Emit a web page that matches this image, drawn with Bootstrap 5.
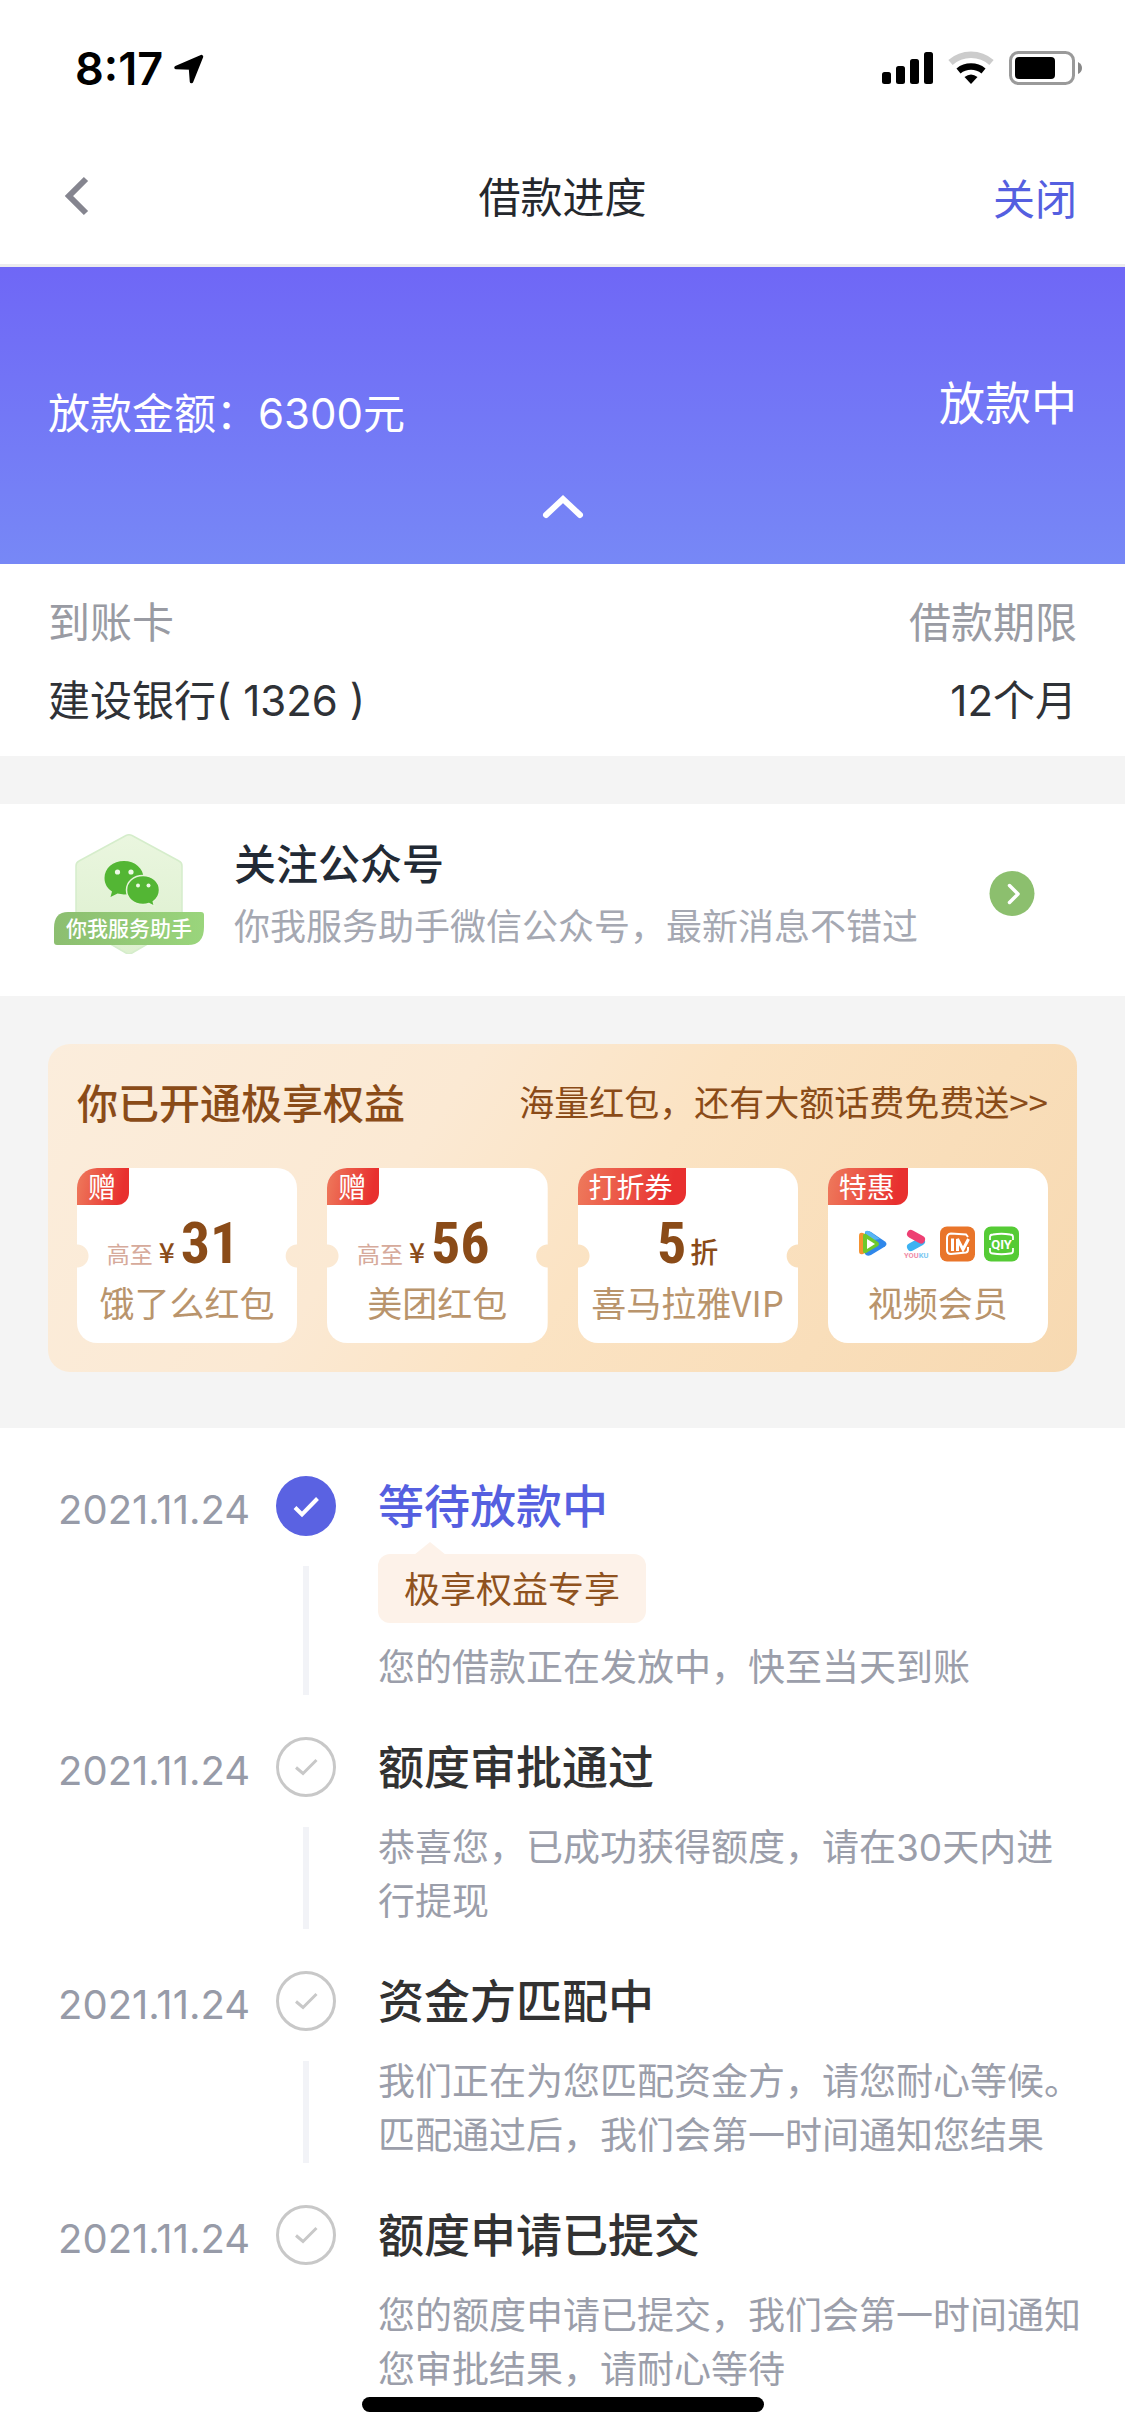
<!DOCTYPE html>
<html lang="zh-CN">
<head>
<meta charset="utf-8">
<meta name="viewport" content="width=device-width, initial-scale=1">
<title>借款进度</title>
<link rel="stylesheet" href="https://cdn.jsdelivr.net/npm/bootstrap@5.3.0/dist/css/bootstrap.min.css">
<style>
  body { font-family: Inter, "Noto Sans CJK SC", sans-serif; font-size: 42px; line-height: 60px; color: #2f3237; background: #fff; }
  svg { display: block; flex: none; }
  a { text-decoration: none; color: inherit; }
  .side-pad { padding-left: 48px; padding-right: 48px; }

  .status-bar { height: 132px; padding: 6px 43px 0 75px; }
  .status-time { font-size: 45px; font-weight: 600; color: #000; }
  .title-bar { height: 135px; border-bottom: 3px solid #ececee; }
  .title-bar h1 { font-size: 42px; line-height: 60px; font-weight: 400; color: #25282d; }
  .bar-btn { border: 0; background: none; padding: 0; line-height: 60px; color: #555fe0; }
  .bar-close { padding-top: 4px; }

  .loan-hero { height: 297px; padding-top: 117px; background: linear-gradient(#6f67f6, #7788f6); color: #fff; }
  .loan-hero .state { font-size: 46px; line-height: 38px; }
  .loan-hero .toggle { border: 0; background: none; padding: 0; margin-top: 49px; }
  .loan-info { padding-top: 20px; padding-bottom: 16px; line-height: 78px; }
  .muted { color: #999ba3; }
  .gap-band { background: #f4f4f4; }

  .follow { padding-top: 26px; padding-bottom: 38px; line-height: 62px; }
  .follow-text { margin-left: 30px; padding-top: 4px; }
  .follow-title { font-weight: 500; color: #222a35; }
  .follow-sub { font-size: 36px; color: #a5a8b2; }
  .follow-badge { margin-left: 6px; }
  .follow-badge text { font-family: "Noto Sans CJK SC", sans-serif; font-size: 21px; font-weight: 500; fill: #fff; }
  .follow-arrow { margin-right: 42px; }

  .perks-wrap { padding: 48px 48px 56px; }
  .perks { border-radius: 22px; padding: 27px 29px 29px; color: #8a4b18; background: linear-gradient(125deg, #fbeddc 0%, #fbe9d3 35%, #fbe3c3 55%, #f7d9b1 100%); font-family: "Noto Sans CJK SC", sans-serif; }
  .perks h2 { font-size: 41px; line-height: 60px; font-weight: 500; }
  .perks-more { font-size: 35px; }
  .coupons { gap: 30px; margin-top: 37px; }
  .coupon { position: relative; flex: 1 1 0; height: 175px; border-radius: 20px; padding-top: 52px;
    background: radial-gradient(circle at 0 88px, transparent 11px, #fff 12px) left / 51% 100% no-repeat,
                radial-gradient(circle at 100% 88px, transparent 11px, #fff 12px) right / 51% 100% no-repeat; }
  .coupon.plain { background: #fff; }
  .coupon-tag { position: absolute; left: 0; top: 0; padding: 0 13px 0 11px; font-size: 28px; line-height: 37px; color: #fff; border-radius: 20px 0 12px 0; background: linear-gradient(100deg, #ee7a5c, #e8302f 85%); }
  .coupon-value { height: 52px; line-height: 46px; gap: 4px; }
  .coupon-value.money { padding-right: 28px; gap: 6px; }
  .coupon-num { font-family: "Roboto Condensed", Roboto, sans-serif; font-weight: 700; font-size: 58px; }
  .coupon-unit { font-size: 28px; font-weight: 500; }
  .coupon-pre { font-size: 23px; color: #d6aa9b; }
  .coupon-name { font-size: 35px; line-height: 60px; color: #b9946c; text-align: center; white-space: nowrap; }
  .coupon-apps { padding-top: 6px; gap: 9px; }
  .coupon-apps text { font-family: Roboto, sans-serif; font-weight: 700; }

  .steps { padding: 48px 42px 0 58px; }
  .step-date { flex: none; width: 218px; font-size: 40px; line-height: 68px; color: #979ba8; }
  .step-rail { flex: none; width: 60px; margin-right: 42px; }
  .step-line { width: 6px; margin: 30px 0 42px; background: #f2f3f7; }
  .step-body { min-width: 0; padding-bottom: 42px; }
  .step:last-child .step-body { padding-bottom: 39px; }
  .step-title { font-size: 46px; line-height: 60px; font-weight: 500; color: #323232; }
  .step-title.now { color: #555fe0; }
  .step-desc { font-size: 37px; line-height: 54px; color: #9b9eaa; margin-top: 24px; }
  .step-tip { position: relative; display: table; margin-top: 18px; padding: 3px 26px 0; font-size: 36px; line-height: 66px; color: #8f5220; background: #fdf2e9; border-radius: 12px; }
  .step-tip::before { content: ""; position: absolute; left: 36px; top: -12px; border: solid transparent; border-width: 0 16px 13px; border-bottom-color: #fdf2e9; }
  .step-tip + .step-desc { margin-top: 18px; }
  .home-bar { position: fixed; left: 50%; bottom: 24px; width: 402px; height: 15px; margin-left: -201px; border-radius: 8px; background: #000; }
</style>
</head>
<body>
<div class="status-bar d-flex align-items-center justify-content-between">
  <div class="d-flex align-items-center gap-2">
    <span class="status-time">8:17</span>
    <svg width="34" height="30" viewBox="-2 0 34 30"><path d="M28.500 2.500 3 13.500 17.500 14 18.500 27.500Z" fill="#000" stroke="#000" stroke-width="3.500" stroke-linejoin="round"/></svg>
  </div>
  <svg width="202" height="36" viewBox="0 0 202 36">
    <rect x="2" y="21" width="9" height="12" rx="2.500"/><rect x="16" y="15" width="9" height="18" rx="2.500"/><rect x="30" y="8" width="9" height="25" rx="2.500"/><rect x="44" y="1" width="9" height="32" rx="2.500"/>
    <path d="M70.500 11.500a31 31 0 0 1 41 0" fill="none" stroke="#ccc" stroke-width="6.500"/>
    <path d="M78.500 20a20 20 0 0 1 25 0" fill="none" stroke="#000" stroke-width="6.500"/>
    <path d="M84.500 26q6.500-5 13 0L91 33Z"/>
    <rect x="130.500" y="1.500" width="63" height="31" rx="8" fill="none" stroke="#9a9a9a" stroke-width="3"/>
    <rect x="135" y="6" width="40" height="22" rx="4"/><path d="M198 11v12q4-2 4-6t-4-6" fill="#888"/>
  </svg>
</div>

<header class="title-bar side-pad d-flex align-items-center">
  <div class="col"><button class="bar-btn d-block" type="button" aria-label="返回"><svg width="60" height="44" viewBox="0 0 60 44"><path d="M38 3 21 20 38 37" fill="none" stroke="#85858f" stroke-width="6"/></svg></button></div>
  <h1 class="m-0">借款进度</h1>
  <div class="col text-end"><button class="bar-btn bar-close" type="button">关闭</button></div>
</header>

<main>
<section class="loan-hero side-pad">
  <div class="d-flex justify-content-between">
    <div>放款金额：6300元</div>
    <div class="state">放款中</div>
  </div>
  <button class="toggle d-block mx-auto" type="button" aria-label="收起"><svg width="44" height="28" viewBox="0 0 44 28"><path d="M5 22 22 6 39 22" fill="none" stroke="#fff" stroke-width="6" stroke-linecap="round"/></svg></button>
</section>

<section class="loan-info side-pad">
  <div class="d-flex justify-content-between muted"><span>到账卡</span><span>借款期限</span></div>
  <div class="d-flex justify-content-between"><span>建设银行( 1326 )</span><span>12个月</span></div>
</section>

<div class="gap-band pt-5">
  <a href="#follow" class="follow side-pad bg-white d-flex align-items-center">
    <svg class="follow-badge" width="150" height="120" viewBox="0 0 150 120">
      <defs>
        <linearGradient id="hexFill" x1="0" y1="0" x2="0" y2="1"><stop offset="0" stop-color="#eaf6df"/><stop offset="1" stop-color="#ddf0cf"/></linearGradient>
        <linearGradient id="ribbonFill"><stop offset="0" stop-color="#8cbe70"/><stop offset="1" stop-color="#9ad57c"/></linearGradient>
      </defs>
      <path d="M72 1.500q3-1.500 6 0L125 27q3 1.500 3 5v58L78 119q-3 1.500-6 0L22 90V32q0-3.500 3-5Z" fill="url(#hexFill)" stroke="#d5edcb" stroke-width="1.500"/>
      <path d="M70 27c-11 0-19.500 7-19.500 17 0 6 3 10.500 7.500 13.500L56.500 63l7-3.500 6.500 1c11 0 19.500-7 19.500-16.500S81 27 70 27Z" fill="#53b634"/>
      <path d="M89 41.500c-9.500 0-16.500 6.500-16.500 14.500S79.500 70.500 89 70.500c2 0 4-.3 6-1l5.500 3-1.200-5c4-2.700 6.200-6.700 6.200-11.500 0-8-7-14.500-16.500-14.500Z" fill="#53b634" stroke="#e6f4da" stroke-width="1.500"/>
      <g fill="#eef9e6"><circle cx="63.500" cy="38" r="2.600"/><circle cx="77" cy="38" r="2.600"/><circle cx="84" cy="51.500" r="2"/><circle cx="94.500" cy="51.500" r="2"/></g>
      <path d="M14 78H147q3 0 3 3v12q0 18-16 18H3q-3 0-3-3V94Q0 78 14 78Z" fill="url(#ribbonFill)"/>
      <text x="75" y="102" text-anchor="middle">你我服务助手</text>
    </svg>
    <div class="follow-text flex-grow-1">
      <div class="follow-title">关注公众号</div>
      <div class="follow-sub">你我服务助手微信公众号，最新消息不错过</div>
    </div>
    <svg class="follow-arrow" width="46" height="46" viewBox="0 0 46 46"><circle cx="23" cy="22.500" r="22.500" fill="#8cbf6e"/><path d="M20.500 14.500 29 23 20.500 31.500" fill="none" stroke="#fff" stroke-width="3.500" stroke-linecap="round" stroke-linejoin="round"/></svg>
  </a>
</div>

<section class="gap-band perks-wrap">
  <div class="perks">
    <div class="d-flex justify-content-between">
      <h2 class="m-0">你已开通极享权益</h2>
      <a class="perks-more" href="#perks">海量红包，还有大额话费免费送&gt;&gt;</a>
    </div>
    <div class="coupons d-flex">
      <div class="coupon">
        <span class="coupon-tag">赠</span>
        <div class="coupon-value money d-flex justify-content-center align-items-baseline"><span class="coupon-pre">高至</span><span class="coupon-unit">¥</span><span class="coupon-num">31</span></div>
        <div class="coupon-name">饿了么红包</div>
      </div>
      <div class="coupon">
        <span class="coupon-tag">赠</span>
        <div class="coupon-value money d-flex justify-content-center align-items-baseline"><span class="coupon-pre">高至</span><span class="coupon-unit">¥</span><span class="coupon-num">56</span></div>
        <div class="coupon-name">美团红包</div>
      </div>
      <div class="coupon">
        <span class="coupon-tag">打折券</span>
        <div class="coupon-value d-flex justify-content-center align-items-baseline"><span class="coupon-num">5</span><span class="coupon-unit">折</span></div>
        <div class="coupon-name">喜马拉雅VIP</div>
      </div>
      <div class="coupon plain">
        <span class="coupon-tag">特惠</span>
        <div class="coupon-value">
          <div class="coupon-apps d-flex justify-content-center">
            <svg width="35" height="36" viewBox="2 0 35 36">
              <path d="M10 6Q12 4 16 6L30 15.500q3 2.500 0 5L16 29q-4 2-6-1Z" fill="#2f87ea"/>
              <path d="M10 6Q12 3 17 7l8 6-12 2Z" fill="#58b6f4"/>
              <path d="M4 10q0-4 4-3l4 2v17l-4 2q-4 1-4-3Z" fill="#f59230"/>
              <path d="M8 10q0-3 3-2l12 8q2 2 0 4L11 27q-3 1-3-2Z" fill="#6cc92c"/>
              <path d="M12 13 20 18 12 23Z" fill="#fff"/>
            </svg>
            <svg width="30" height="36" viewBox="0 0 30 36">
              <path d="M10 21 20 15.500" stroke="#3db2f2" stroke-width="8" stroke-linecap="round"/>
              <path d="M10 8 20 13.500" stroke="#ee3f73" stroke-width="8" stroke-linecap="round"/>
              <text x="3" y="32" font-size="7.500" fill="#f08aa6">YOU<tspan fill="#7cc8f2">KU</tspan></text>
            </svg>
            <svg width="35" height="36" viewBox="0 0 35 36">
              <rect y="0.500" width="35" height="35" rx="7" fill="#e9752a"/>
              <path d="M28 11 26 8.500 11 7.500Q7 8 7 12v12q0 4 4 4l15-1.500q2-.5 2-3V21" fill="none" stroke="#fff" stroke-width="2"/>
              <path d="M12.500 25V12.500M17.500 25V13L23 23.500 28.500 13" fill="none" stroke="#fff" stroke-width="3"/>
            </svg>
            <svg width="35" height="36" viewBox="0 0 35 36">
              <rect y="0.500" width="35" height="35" rx="7" fill="#55cb35"/>
              <path d="M6 14V11q0-2.500 3-2.500 8.500-1.500 17 0 3 0 3 2.500v3M6 22v3q0 2.500 3 2.500 8.500 1.500 17 0 3 0 3-2.500v-3" fill="none" stroke="#fff" stroke-width="1.800"/>
              <text x="17.500" y="23" font-size="13" text-anchor="middle" fill="#fff">QIY</text>
            </svg>
          </div>
        </div>
        <div class="coupon-name">视频会员</div>
      </div>
    </div>
  </div>
</section>

<section class="steps">
  <div class="step d-flex">
    <div class="step-date">2021.11.24</div>
    <div class="step-rail d-flex flex-column align-items-center">
      <svg width="60" height="60" viewBox="0 0 60 60"><circle cx="30" cy="30" r="30" fill="#5a62e2"/><path d="M19 31.500 26 38.500 41.500 22.500" fill="none" stroke="#fff" stroke-width="4"/></svg>
      <div class="step-line flex-grow-1"></div>
    </div>
    <div class="step-body flex-grow-1">
      <h2 class="step-title now m-0">等待放款中</h2>
      <div class="step-tip">极享权益专享</div>
      <p class="step-desc mb-0">您的借款正在发放中，快至当天到账</p>
    </div>
  </div>
  <div class="step d-flex">
    <div class="step-date">2021.11.24</div>
    <div class="step-rail d-flex flex-column align-items-center">
      <svg width="60" height="60" viewBox="0 0 60 60"><circle cx="30" cy="30" r="28.500" fill="none" stroke="#c8c8c8" stroke-width="3"/><path d="M20 30.500 27 36.500 40.500 23" fill="none" stroke="#c8c8c8" stroke-width="3"/></svg>
      <div class="step-line flex-grow-1"></div>
    </div>
    <div class="step-body flex-grow-1">
      <h2 class="step-title m-0">额度审批通过</h2>
      <p class="step-desc mb-0">恭喜您，已成功获得额度，请在30天内进行提现</p>
    </div>
  </div>
  <div class="step d-flex">
    <div class="step-date">2021.11.24</div>
    <div class="step-rail d-flex flex-column align-items-center">
      <svg width="60" height="60" viewBox="0 0 60 60"><circle cx="30" cy="30" r="28.500" fill="none" stroke="#c8c8c8" stroke-width="3"/><path d="M20 30.500 27 36.500 40.500 23" fill="none" stroke="#c8c8c8" stroke-width="3"/></svg>
      <div class="step-line flex-grow-1"></div>
    </div>
    <div class="step-body flex-grow-1">
      <h2 class="step-title m-0">资金方匹配中</h2>
      <p class="step-desc mb-0">我们正在为您匹配资金方，请您耐心等候。匹配通过后，我们会第一时间通知您结果</p>
    </div>
  </div>
  <div class="step d-flex">
    <div class="step-date">2021.11.24</div>
    <div class="step-rail d-flex flex-column align-items-center">
      <svg width="60" height="60" viewBox="0 0 60 60"><circle cx="30" cy="30" r="28.500" fill="none" stroke="#c8c8c8" stroke-width="3"/><path d="M20 30.500 27 36.500 40.500 23" fill="none" stroke="#c8c8c8" stroke-width="3"/></svg>
    </div>
    <div class="step-body flex-grow-1">
      <h2 class="step-title m-0">额度申请已提交</h2>
      <p class="step-desc mb-0">您的额度申请已提交，我们会第一时间通知您审批结果，请耐心等待</p>
    </div>
  </div>
</section>
</main>
<div class="home-bar"></div>
<script src="https://cdn.jsdelivr.net/npm/bootstrap@5.3.0/dist/js/bootstrap.bundle.min.js"></script>
</body>
</html>
